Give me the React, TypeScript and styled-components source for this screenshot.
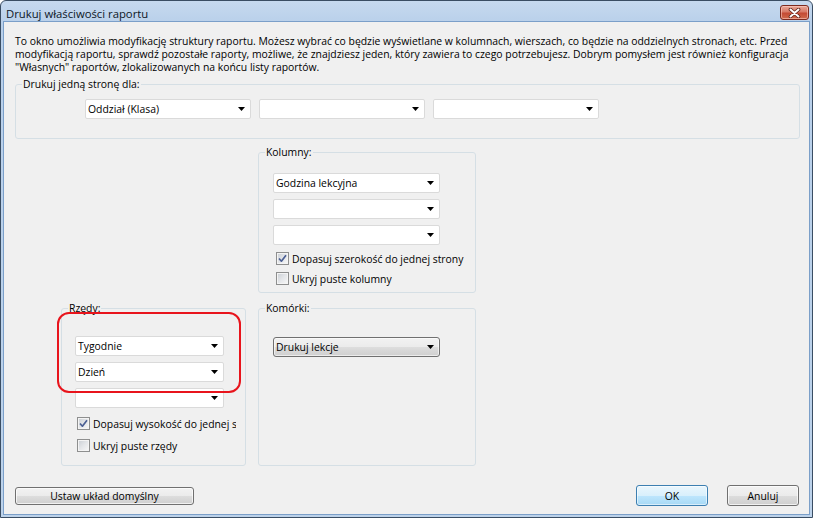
import React from "react";
import styled, { createGlobalStyle, css } from "styled-components";

const GlobalStyle = createGlobalStyle`
  html, body {
    margin: 0;
    padding: 0;
    background: #ffffff;
  }
`;

const FONT = `"Open Sans", "Noto Sans", "Liberation Sans", sans-serif`;

const Window = styled.div`
  width: 813px;
  height: 518px;
  box-sizing: border-box;
  display: flex;
  flex-direction: column;
  border: 1px solid #3a4d63;
  border-radius: 6px 6px 0 0;
  background: linear-gradient(#c6d9ef, #b9d0ea 22px, #bcd2ea);
  padding: 0 2px 2px;
  font-family: ${FONT};
  font-size: 10.4px;
  color: #000;
  overflow: hidden;
`;

const TitleBar = styled.div`
  height: 20px;
  flex: none;
  display: flex;
  align-items: flex-start;
  justify-content: space-between;
  padding-left: 3px;
`;

const Title = styled.span`
  margin-top: 5px;
  font-size: 11.3px;
  line-height: 16px;
  color: #0c1626;
`;

const CloseButton = styled.div`
  width: 29px;
  height: 15px;
  margin-top: 4px;
  margin-right: 1px;
  box-sizing: border-box;
  border: 1px solid #7d2a1f;
  border-radius: 3px;
  background: linear-gradient(#e9a899, #d77966 45%, #c44a34 55%, #d06a4c);
  box-shadow: inset 0 0 0 1px rgba(255, 210, 200, 0.55);
  display: flex;
  align-items: center;
  justify-content: center;
`;

const Body = styled.div`
  flex: 1;
  display: flex;
  flex-direction: column;
  background: #f0f0f0;
  border: 1px solid #7b9fc9;
  padding: 0 9px 8px 11px;
`;

const Intro = styled.p`
  margin: 0;
  padding-top: 13px;
  line-height: 13px;
  white-space: nowrap;
`;

const Group = styled.fieldset`
  margin: 0;
  padding: 0;
  min-width: 0;
  border: 1px solid #d5dfe5;
  border-radius: 3px;
`;

const Legend = styled.legend`
  margin-left: 6px;
  padding: 0 1px;
  line-height: 14px;
`;

const TopGroup = styled(Group)`
  margin-top: 3px;
`;

const TopRow = styled.div`
  display: flex;
  gap: 8px;
  padding: 8px 0 19px 69px;
`;

const Layout = styled.div`
  margin-top: 6px;
  padding-left: 46px;
  display: grid;
  grid-template-columns: 185px 218px;
  column-gap: 12px;
  row-gap: 8px;
`;

const Inner = styled.div<{ $top: number; $left: number; $bottom: number }>`
  display: flex;
  flex-direction: column;
  padding: ${(p) => p.$top}px 0 ${(p) => p.$bottom}px ${(p) => p.$left}px;
`;

const Stack = styled.div`
  display: flex;
  flex-direction: column;
  gap: 6px;
`;

const Combo = styled.div<{ $width: number; $list?: boolean }>`
  width: ${(p) => p.$width}px;
  height: 20px;
  box-sizing: border-box;
  display: flex;
  align-items: center;
  justify-content: space-between;
  padding: 0 5px 0 2px;
  border: 1px solid #dadada;
  border-radius: 2px;
  background: #ffffff;
  white-space: nowrap;
  ${(p) =>
    p.$list &&
    css`
      border-color: #707070;
      border-radius: 3px;
      background: linear-gradient(#f2f2f2, #ebebeb 50%, #dddddd 51%, #cfcfcf);
      box-shadow: inset 0 0 0 1px rgba(255, 255, 255, 0.6);
    `}
`;

const Checks = styled.div<{ $top: number; $gap: number; $indent: number }>`
  display: flex;
  flex-direction: column;
  margin-top: ${(p) => p.$top}px;
  gap: ${(p) => p.$gap}px;
  padding-left: ${(p) => p.$indent}px;
`;

const CheckRow = styled.label<{ $width?: number }>`
  display: flex;
  align-items: center;
  gap: 3px;
  height: 17px;
  white-space: nowrap;
  overflow: hidden;
  ${(p) => p.$width && `width: ${p.$width}px;`}
`;

const Box = styled.span`
  flex: none;
  width: 13px;
  height: 13px;
  box-sizing: border-box;
  border: 1px solid #8e8f8f;
  background: linear-gradient(135deg, #c9ced4, #e4e6e9 50%, #f8f8f8);
  box-shadow: inset 0 0 0 1px #f4f4f4;
  display: flex;
  align-items: center;
  justify-content: center;
`;

const RowsCell = styled.div`
  position: relative;
  grid-column: 1;
  grid-row: 2;
`;

const Highlight = styled.div`
  position: absolute;
  left: -4px;
  top: 11px;
  width: 184px;
  height: 81px;
  box-sizing: border-box;
  border: 2px solid #e8141c;
  border-radius: 12px;
  pointer-events: none;
`;

const Footer = styled.div`
  margin-top: auto;
  display: flex;
  align-items: center;
`;

const Button = styled.button<{ $width: number; $height: number; $default?: boolean }>`
  width: ${(p) => p.$width}px;
  height: ${(p) => p.$height}px;
  box-sizing: border-box;
  margin: 0;
  padding: 0;
  font-family: ${FONT};
  font-size: 10.4px;
  color: #000;
  border: 1px solid #707070;
  border-radius: 3px;
  background: linear-gradient(#f2f2f2, #ebebeb 50%, #dddddd 51%, #cfcfcf);
  box-shadow: inset 0 0 0 1px rgba(255, 255, 255, 0.7);
  ${(p) =>
    p.$default &&
    css`
      border-color: #3c7fb1;
      background: linear-gradient(#eaf6fd, #d9f0fc 50%, #bee6fd 51%, #a7d9f5);
      box-shadow: inset 0 0 0 1px rgba(255, 255, 255, 0.55), 0 0 0 0 transparent;
    `}
`;

const Spacer = styled.div`
  flex: 1;
`;

const ButtonGroup = styled.div`
  display: flex;
  gap: 19px;
  margin-right: 1px;
`;

const Arrow = () => (
  <svg width="7" height="4" viewBox="0 0 7 4">
    <path d="M0 0 H7 L3.5 4 Z" fill="#000" />
  </svg>
);

const Tick = () => (
  <svg width="11" height="11" viewBox="0 0 11 11">
    <path d="M2 5.5 L4.4 8.2 L9 2.2" fill="none" stroke="#4b5f93" strokeWidth="1.7" strokeLinejoin="round" />
  </svg>
);

const CloseGlyph = () => (
  <svg width="13" height="10" viewBox="0 0 13 10">
    <path d="M2.5 1.5 L10.5 8.5 M10.5 1.5 L2.5 8.5" stroke="#5a2118" strokeWidth="3.6" strokeLinecap="round" />
    <path d="M2.5 1.5 L10.5 8.5 M10.5 1.5 L2.5 8.5" stroke="#ffffff" strokeWidth="2" strokeLinecap="round" />
  </svg>
);

const Dropdown = ({ value = "", width, list }: { value?: string; width: number; list?: boolean }) => (
  <Combo $width={width} $list={list}>
    <span>{value}</span>
    <Arrow />
  </Combo>
);

const Check = ({ label, checked, width }: { label: string; checked?: boolean; width?: number }) => (
  <CheckRow $width={width}>
    <Box>{checked && <Tick />}</Box>
    <span>{label}</span>
  </CheckRow>
);

export default function App() {
  return (
    <>
      <GlobalStyle />
      <Window>
        <TitleBar>
          <Title>Drukuj właściwości raportu</Title>
          <CloseButton>
            <CloseGlyph />
          </CloseButton>
        </TitleBar>
        <Body>
          <Intro>
            To okno umożliwia modyfikację struktury raportu. Możesz wybrać co będzie wyświetlane w kolumnach, wierszach, co będzie na oddzielnych stronach, etc. Przed
            <br />
            modyfikacją raportu, sprawdź pozostałe raporty, możliwe, że znajdziesz jeden, który zawiera to czego potrzebujesz. Dobrym pomysłem jest również konfiguracja
            <br />
            "Własnych" raportów, zlokalizowanych na końcu listy raportów.
          </Intro>

          <TopGroup>
            <Legend>Drukuj jedną stronę dla:</Legend>
            <TopRow>
              <Dropdown value="Oddział (Klasa)" width={166} />
              <Dropdown width={166} />
              <Dropdown width={166} />
            </TopRow>
          </TopGroup>

          <Layout>
            <Group style={{ gridColumn: 2, gridRow: 1 }}>
              <Legend>Kolumny:</Legend>
              <Inner $top={14} $left={14} $bottom={5}>
                <Stack>
                  <Dropdown value="Godzina lekcyjna" width={167} />
                  <Dropdown width={167} />
                  <Dropdown width={167} />
                </Stack>
                <Checks $top={5} $gap={3} $indent={3}>
                  <Check label="Dopasuj szerokość do jednej strony" checked />
                  <Check label="Ukryj puste kolumny" />
                </Checks>
              </Inner>
            </Group>

            <RowsCell>
              <Group>
                <Legend>Rzędy:</Legend>
                <Inner $top={21} $left={13} $bottom={11}>
                  <Stack>
                    <Dropdown value="Tygodnie" width={149} />
                    <Dropdown value="Dzień" width={149} />
                    <Dropdown width={149} />
                  </Stack>
                  <Checks $top={7} $gap={5} $indent={2}>
                    <Check label="Dopasuj wysokość do jednej strony" checked width={159} />
                    <Check label="Ukryj puste rzędy" />
                  </Checks>
                </Inner>
              </Group>
              <Highlight />
            </RowsCell>

            <Group style={{ gridColumn: 2, gridRow: 2 }}>
              <Legend>Komórki:</Legend>
              <Inner $top={22} $left={14} $bottom={0}>
                <Dropdown value="Drukuj lekcje" width={167} list />
              </Inner>
            </Group>
          </Layout>

          <Footer>
            <Button $width={179} $height={18}>Ustaw układ domyślny</Button>
            <Spacer />
            <ButtonGroup>
              <Button $width={72} $height={21} $default>OK</Button>
              <Button $width={72} $height={21}>Anuluj</Button>
            </ButtonGroup>
          </Footer>
        </Body>
      </Window>
    </>
  );
}
